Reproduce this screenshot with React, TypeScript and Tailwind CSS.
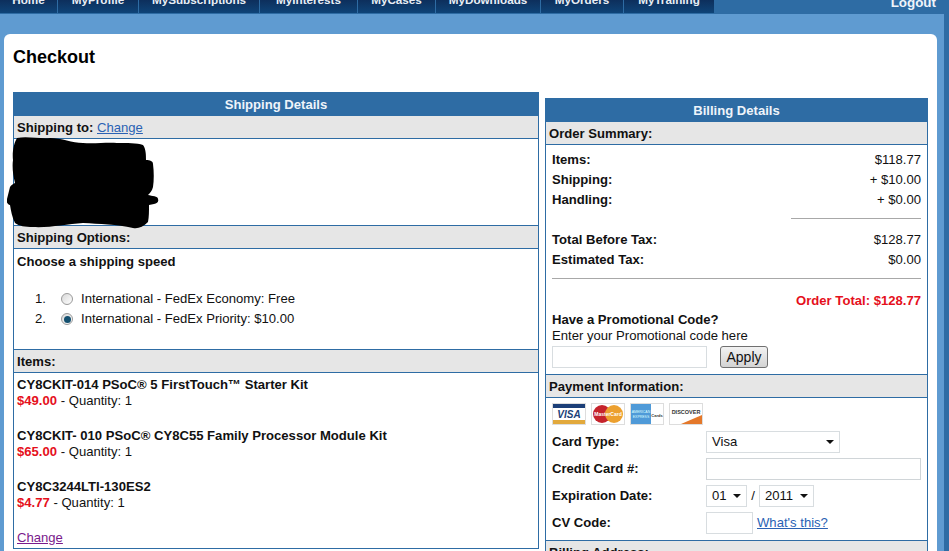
import React from 'react';

const tabs = [
  { label: 'Home', w: 'w-[57px]' },
  { label: 'MyProfile', w: 'w-[80px]' },
  { label: 'MySubscriptions', w: 'w-[120px]' },
  { label: 'MyInterests', w: 'w-[97px]' },
  { label: 'MyCases', w: 'w-[77px]' },
  { label: 'MyDownloads', w: 'w-[104px]' },
  { label: 'MyOrders', w: 'w-[82px]' },
  { label: 'MyTraining', w: 'w-[90px]' },
];

const items = [
  { name: 'CY8CKIT-014 PSoC® 5 FirstTouch™ Starter Kit', price: '$49.00' },
  { name: 'CY8CKIT- 010 PSoC® CY8C55 Family Processor Module Kit', price: '$65.00' },
  { name: 'CY8C3244LTI-130ES2', price: '$4.77' },
];

const Bar = ({ children }: { children: React.ReactNode }) => (
  <div className="h-[23px] bg-[#e6e6e6] border-b border-[#2e6ca4] px-[3px] leading-[24px] font-bold text-[#111]">
    {children}
  </div>
);

const Title = ({ children }: { children: React.ReactNode }) => (
  <div className="h-[24px] bg-[#2e6ca4] text-center text-[#eef4fa] font-bold leading-[26px]">
    {children}
  </div>
);

const Row = ({ label, value }: { label: string; value: string }) => (
  <div className="flex justify-between h-[20px] leading-[22px]">
    <span className="font-bold">{label}</span>
    <span>{value}</span>
  </div>
);

const Radio = ({ on }: { on?: boolean }) => (
  <span className="w-[12px] h-[12px] rounded-full border border-[#9a9a9a] bg-gradient-to-br from-[#d8d8d8] to-white flex items-center justify-center">
    {on && <span className="w-[7px] h-[7px] rounded-full bg-[#14506f]" />}
  </span>
);

const Caret = () => (
  <svg width="8" height="4" viewBox="0 0 8 4" className="shrink-0">
    <path d="M0 0h8L4 4z" fill="#111" />
  </svg>
);

const Select = ({ value, className }: { value: string; className: string }) => (
  <div className={`h-[22px] border border-[#d8dde0] flex items-center justify-between px-[5px] ${className}`}>
    <span>{value}</span>
    <Caret />
  </div>
);

const Field = ({ label, children }: { label: string; children: React.ReactNode }) => (
  <div className="flex items-center h-[27px]">
    <span className="w-[154px] font-bold">{label}</span>
    {children}
  </div>
);

// marker scribble over the address, runs slightly past the box
const Scribble = () => (
  <svg width="152" height="92" viewBox="0 0 152 92" className="relative z-10 -ml-[7px] -mt-[2px] inline-block align-top">
    <path
      fill="#000"
      d="M10 1 C20 -1 33 2 43 1 C55 1 65 6 76 6 C88 7 100 5 110 6 C120 6 130 6 136 8 C139 12 139 18 139 23 C143 23 146 24 146 27 C147 35 147 43 146 50 C145 54 143 56 141 58 C145 59 151 59 151 62 C152 65 150 66 147 67 L142 68 C142 74 142 80 141 85 C136 90 131 92 126 91 C110 87 92 87 76 86 C60 87 42 91 26 90 C18 90 12 89 8 86 C5 80 4 74 3 68 C0 67 -1 64 0 62 C1 58 2 54 3 50 C4 48 6 47 8 46 C6 38 5 30 6 23 C5 15 7 6 10 1 Z"
    />
  </svg>
);

const Visa = () => (
  <svg width="34" height="22" viewBox="0 0 34 22">
    <rect x="0.5" y="0.5" width="33" height="21" fill="#fff" stroke="#ddd" />
    <rect x="1" y="1" width="32" height="4" fill="#1c3f78" />
    <rect x="1" y="17" width="32" height="4" fill="#e2a93c" />
    <text x="17" y="15" textAnchor="middle" fontSize="10" fontWeight="700" fontStyle="italic" fill="#1c3f78" fontFamily="Liberation Sans">VISA</text>
  </svg>
);

const MasterCard = () => (
  <svg width="34" height="22" viewBox="0 0 34 22">
    <rect x="0.5" y="0.5" width="33" height="21" fill="#fff" stroke="#ddd" />
    <circle cx="11" cy="11" r="9" fill="#c5232c" />
    <circle cx="23" cy="11" r="9" fill="#eca02f" />
    <text x="17" y="13" textAnchor="middle" fontSize="5" fontWeight="700" fill="#fff" fontFamily="Liberation Sans">MasterCard</text>
  </svg>
);

const Amex = () => (
  <svg width="34" height="22" viewBox="0 0 34 22">
    <rect x="0.5" y="0.5" width="33" height="21" fill="#fff" stroke="#ddd" />
    <rect x="1" y="1" width="20" height="20" fill="#4f9ad8" />
    <text x="11" y="10" textAnchor="middle" fontSize="3.5" fill="#dff" fontFamily="Liberation Sans">AMERICAN</text>
    <text x="11" y="15" textAnchor="middle" fontSize="3.5" fill="#dff" fontFamily="Liberation Sans">EXPRESS</text>
    <text x="27" y="14" textAnchor="middle" fontSize="4" fontWeight="700" fill="#333" fontFamily="Liberation Sans">Cards</text>
  </svg>
);

const Discover = () => (
  <svg width="34" height="22" viewBox="0 0 34 22">
    <rect x="0.5" y="0.5" width="33" height="21" fill="#fff" stroke="#ddd" />
    <path d="M12 21 L33 21 L33 12 Z" fill="#e4782a" />
    <text x="17" y="11" textAnchor="middle" fontSize="5.5" fontWeight="700" fill="#333" fontFamily="Liberation Sans">DISCOVER</text>
  </svg>
);

export default function App() {
  return (
    <div className="h-[551px] overflow-hidden bg-[#2e6ca4] text-[13.1px] text-[#111] font-['Liberation_Sans',Arial,sans-serif]">
      <div className="w-[944px] h-full bg-[#5f9bd1]">
        <header className="h-[14px] bg-[#2e6ca4] flex justify-between overflow-hidden">
          <nav className="flex gap-[1px] items-end h-[13px]">
            {tabs.map(t => (
              <div
                key={t.label}
                className={`${t.w} h-[13px] bg-gradient-to-b from-[#0d2f5c] to-[#0e4478] text-[#e8eef5] font-bold text-[11.7px] text-center overflow-hidden`}
              >
                <div className="-mt-[9px] h-[18px] leading-[18px]">{t.label}</div>
              </div>
            ))}
          </nav>
          <a className="text-[#eef4fa] font-bold text-[13.4px] leading-[14px] pr-[8px] -mt-[4px]">Logout</a>
        </header>

        <main className="mt-[20px] ml-[4px] mr-[7px] h-[600px] bg-white rounded-t-[6px] px-[9px]">
          <h1 className="pt-[12px] h-[58px] text-[18px] leading-[22px] font-bold text-black">Checkout</h1>
          <div className="flex items-start gap-[6px]">
            <section className="w-[526px] border-x border-[#2e6ca4]">
              <Title>Shipping Details</Title>
              <Bar>
                Shipping to: <a className="font-normal text-[#2a62b4] underline">Change</a>
              </Bar>
              <div className="h-[87px] border-b border-[#2e6ca4]">
                <Scribble />
              </div>
              <Bar>Shipping Options:</Bar>
              <div className="h-[101px] border-b border-[#2e6ca4] px-[3px] pt-[2px]">
                <div className="font-bold h-[20px] leading-[22px]">Choose a shipping speed</div>
                <div className="mt-[18px] ml-[18px]">
                  <div className="flex items-center h-[20px]">
                    <span className="w-[26px]">1.</span>
                    <Radio />
                    <span className="ml-[8px]">International - FedEx Economy: Free</span>
                  </div>
                  <div className="flex items-center h-[20px]">
                    <span className="w-[26px]">2.</span>
                    <Radio on />
                    <span className="ml-[8px]">International - FedEx Priority: $10.00</span>
                  </div>
                </div>
              </div>
              <Bar>Items:</Bar>
              <div className="h-[176px] border-b border-[#2e6ca4] px-[3px] pt-[4px] leading-[16px]">
                {items.map(it => (
                  <div key={it.name} className="h-[51px]">
                    <div className="font-bold">{it.name}</div>
                    <div>
                      <span className="font-bold text-[#e5101c]">{it.price}</span> - Quantity: 1
                    </div>
                  </div>
                ))}
                <a className="block text-[#7a1a8c] underline">Change</a>
              </div>
            </section>

            <section className="w-[383px] mt-[6px] border-x border-[#2e6ca4]">
              <Title>Billing Details</Title>
              <Bar>Order Summary:</Bar>
              <div className="h-[230px] border-b border-[#2e6ca4] px-[6px] pt-[4px]">
                <Row label="Items:" value="$118.77" />
                <Row label=" Shipping:" value="+ $10.00" />
                <Row label=" Handling:" value="+ $0.00" />
                <div className="ml-[239px] mt-[9px] mb-[10px] border-t border-[#a8a8a8]" />
                <Row label="Total Before Tax:" value="$128.77" />
                <Row label="Estimated Tax:" value="$0.00" />
                <div className="mt-[9px] border-t border-[#a8a8a8]" />
                <div className="mt-[13px] h-[18px] leading-[18px] text-right font-bold text-[#e5101c]">Order Total: $128.77</div>
                <div className="mt-[2px] font-bold h-[16px] leading-[16px]">Have a Promotional Code?</div>
                <div className="h-[16px] leading-[16px]">Enter your Promotional code here</div>
                <div className="flex items-center gap-[13px] mt-[2px]">
                  <div className="w-[155px] h-[22px] border border-[#d8dde0]" />
                  <button className="w-[48px] h-[22px] rounded-[3px] border border-[#707070] bg-gradient-to-b from-[#f2f2f2] to-[#d4d4d4] text-[14px] leading-[18px]">
                    Apply
                  </button>
                </div>
              </div>
              <Bar>Payment Information:</Bar>
              <div className="h-[143px] border-b border-[#2e6ca4] px-[6px] pt-[5px]">
                <div className="flex gap-[5px] h-[23px]">
                  <Visa />
                  <MasterCard />
                  <Amex />
                  <Discover />
                </div>
                <div className="mt-[2px]">
                  <Field label="Card Type:">
                    <Select value="Visa" className="w-[134px]" />
                  </Field>
                  <Field label="Credit Card #:">
                    <div className="w-[215px] h-[22px] border border-[#d0d5d8]" />
                  </Field>
                  <Field label="Expiration Date:">
                    <Select value="01" className="w-[41px]" />
                    <span className="w-[12px] text-center">/</span>
                    <Select value="2011" className="w-[55px]" />
                  </Field>
                  <Field label="CV Code:">
                    <div className="w-[47px] h-[22px] border border-[#d8dde0]" />
                    <a className="ml-[4px] text-[#2a62b4] underline">What's this?</a>
                  </Field>
                </div>
              </div>
              <Bar>Billing Address:</Bar>
            </section>
          </div>
        </main>
      </div>
    </div>
  );
}
